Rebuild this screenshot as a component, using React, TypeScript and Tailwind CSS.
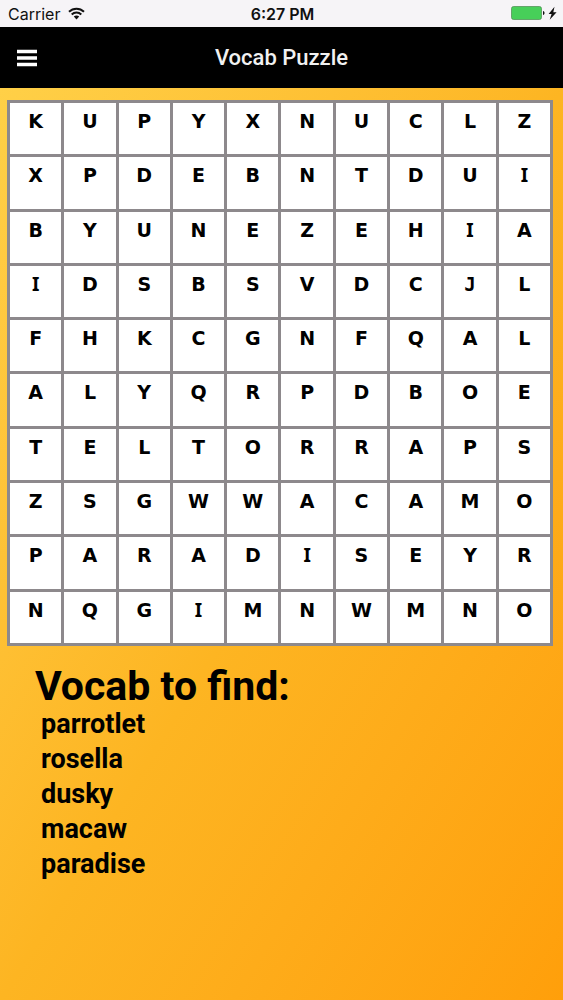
const GRID = [
  'KUPYXNUCLZ',
  'XPDEBNTDUI',
  'BYUNEZEHIA',
  'IDSBSVDCJL',
  'FHKCGNFQAL',
  'ALYQRPDBOE',
  'TELTORRAPS',
  'ZSGWWACAMO',
  'PARADISEYR',
  'NQGIMNWMNO',
];

const WORDS = ['parrotlet', 'rosella', 'dusky', 'macaw', 'paradise'];

// I and J come from faces that draw them with bars
function letterFont(letter: string): string {
  if (letter === 'I') return "font-['Noto_Sans',sans-serif]";
  if (letter === 'J') return "font-['DejaVu_Sans_Mono',monospace]";
  return "font-['DejaVu_Sans',sans-serif]";
}

function WifiIcon() {
  return (
    <svg width="17" height="13" viewBox="0 0 17 13" fill="none" stroke="#111" aria-hidden="true">
      <path d="M1 4.700C5.200.6 11.800.6 16 4.700" strokeWidth="2" />
      <path d="M3.700 7.500c2.700-2.600 6.900-2.600 9.600 0" strokeWidth="2" />
      <path d="M8.500 12.400 5.800 9.600c1.500-1.500 3.900-1.500 5.400 0Z" fill="#111" stroke="none" />
    </svg>
  );
}

function BatteryIcon() {
  return (
    <svg width="46" height="15" viewBox="0 0 46 15" aria-hidden="true">
      <rect x="0.5" y="0.5" width="30" height="13" rx="2" fill="#47cf59" stroke="#4b8a50" strokeWidth="0.7" />
      <path d="M32 5c2 .3 2 3.700 0 4Z" fill="#111" />
      <path d="M43.500.8 37.600 8h3l-1.900 5.700L45.600 6.300h-3.300Z" fill="#111" />
    </svg>
  );
}

function StatusBar() {
  return (
    <div className="grid h-[27px] grid-cols-[1fr_auto_1fr] items-center bg-[#f6f4f7] pr-1.5 pl-2 font-['Inter',sans-serif] text-[#111]">
      <div className="flex items-center gap-2 text-base">
        <span>Carrier</span>
        <WifiIcon />
      </div>
      <span className="text-center text-base font-semibold">6:27 PM</span>
      <div className="flex justify-end">
        <BatteryIcon />
      </div>
    </div>
  );
}

function Header() {
  return (
    <header className="grid h-[61px] grid-cols-[1fr_auto_1fr] items-center bg-black px-4 text-white">
      <button type="button" aria-label="Open menu" className="justify-self-start">
        <svg width="22" height="18" viewBox="0 0 22 18" fill="#fff" aria-hidden="true">
          <path d="M1 .7h20v3.600H1ZM1 7.200h20v3.600H1ZM1 13.700h20v3.600H1Z" />
        </svg>
      </button>
      <h1 className="text-[22px] font-medium text-[#f1f1f1]">Vocab Puzzle</h1>
    </header>
  );
}

export default function App() {
  return (
    <div className="flex min-h-screen flex-col font-['Roboto',sans-serif] text-black">
      <StatusBar />
      <Header />

      <main className="flex-1 bg-linear-to-br from-[#ffd047] via-[#fdb522] to-[#ff9f0a] pt-3 pr-2.5 pb-8 pl-[7px]">
        {/* Letter grid, the gaps are the ruled lines */}
        <div className="grid aspect-square w-full grid-cols-10 grid-rows-10 gap-[3px] bg-[#8d898c] p-[3px]">
          {GRID.map((row, r) =>
            row.split('').map((letter, c) => (
              <button
                key={`${r}-${c}`}
                type="button"
                className={`flex items-start justify-center bg-white pt-1.5 text-[19px] leading-6 font-bold ${letterFont(letter)}`}
              >
                {letter}
              </button>
            )),
          )}
        </div>

        <section className="pt-5 pl-7">
          <h2 className="text-[41px] leading-[41px] font-bold">Vocab to find:</h2>
          <ul className="pl-1.5 text-[27px] leading-[35px] font-bold">
            {WORDS.map((word) => (
              <li key={word}>{word}</li>
            ))}
          </ul>
        </section>
      </main>
    </div>
  );
}
